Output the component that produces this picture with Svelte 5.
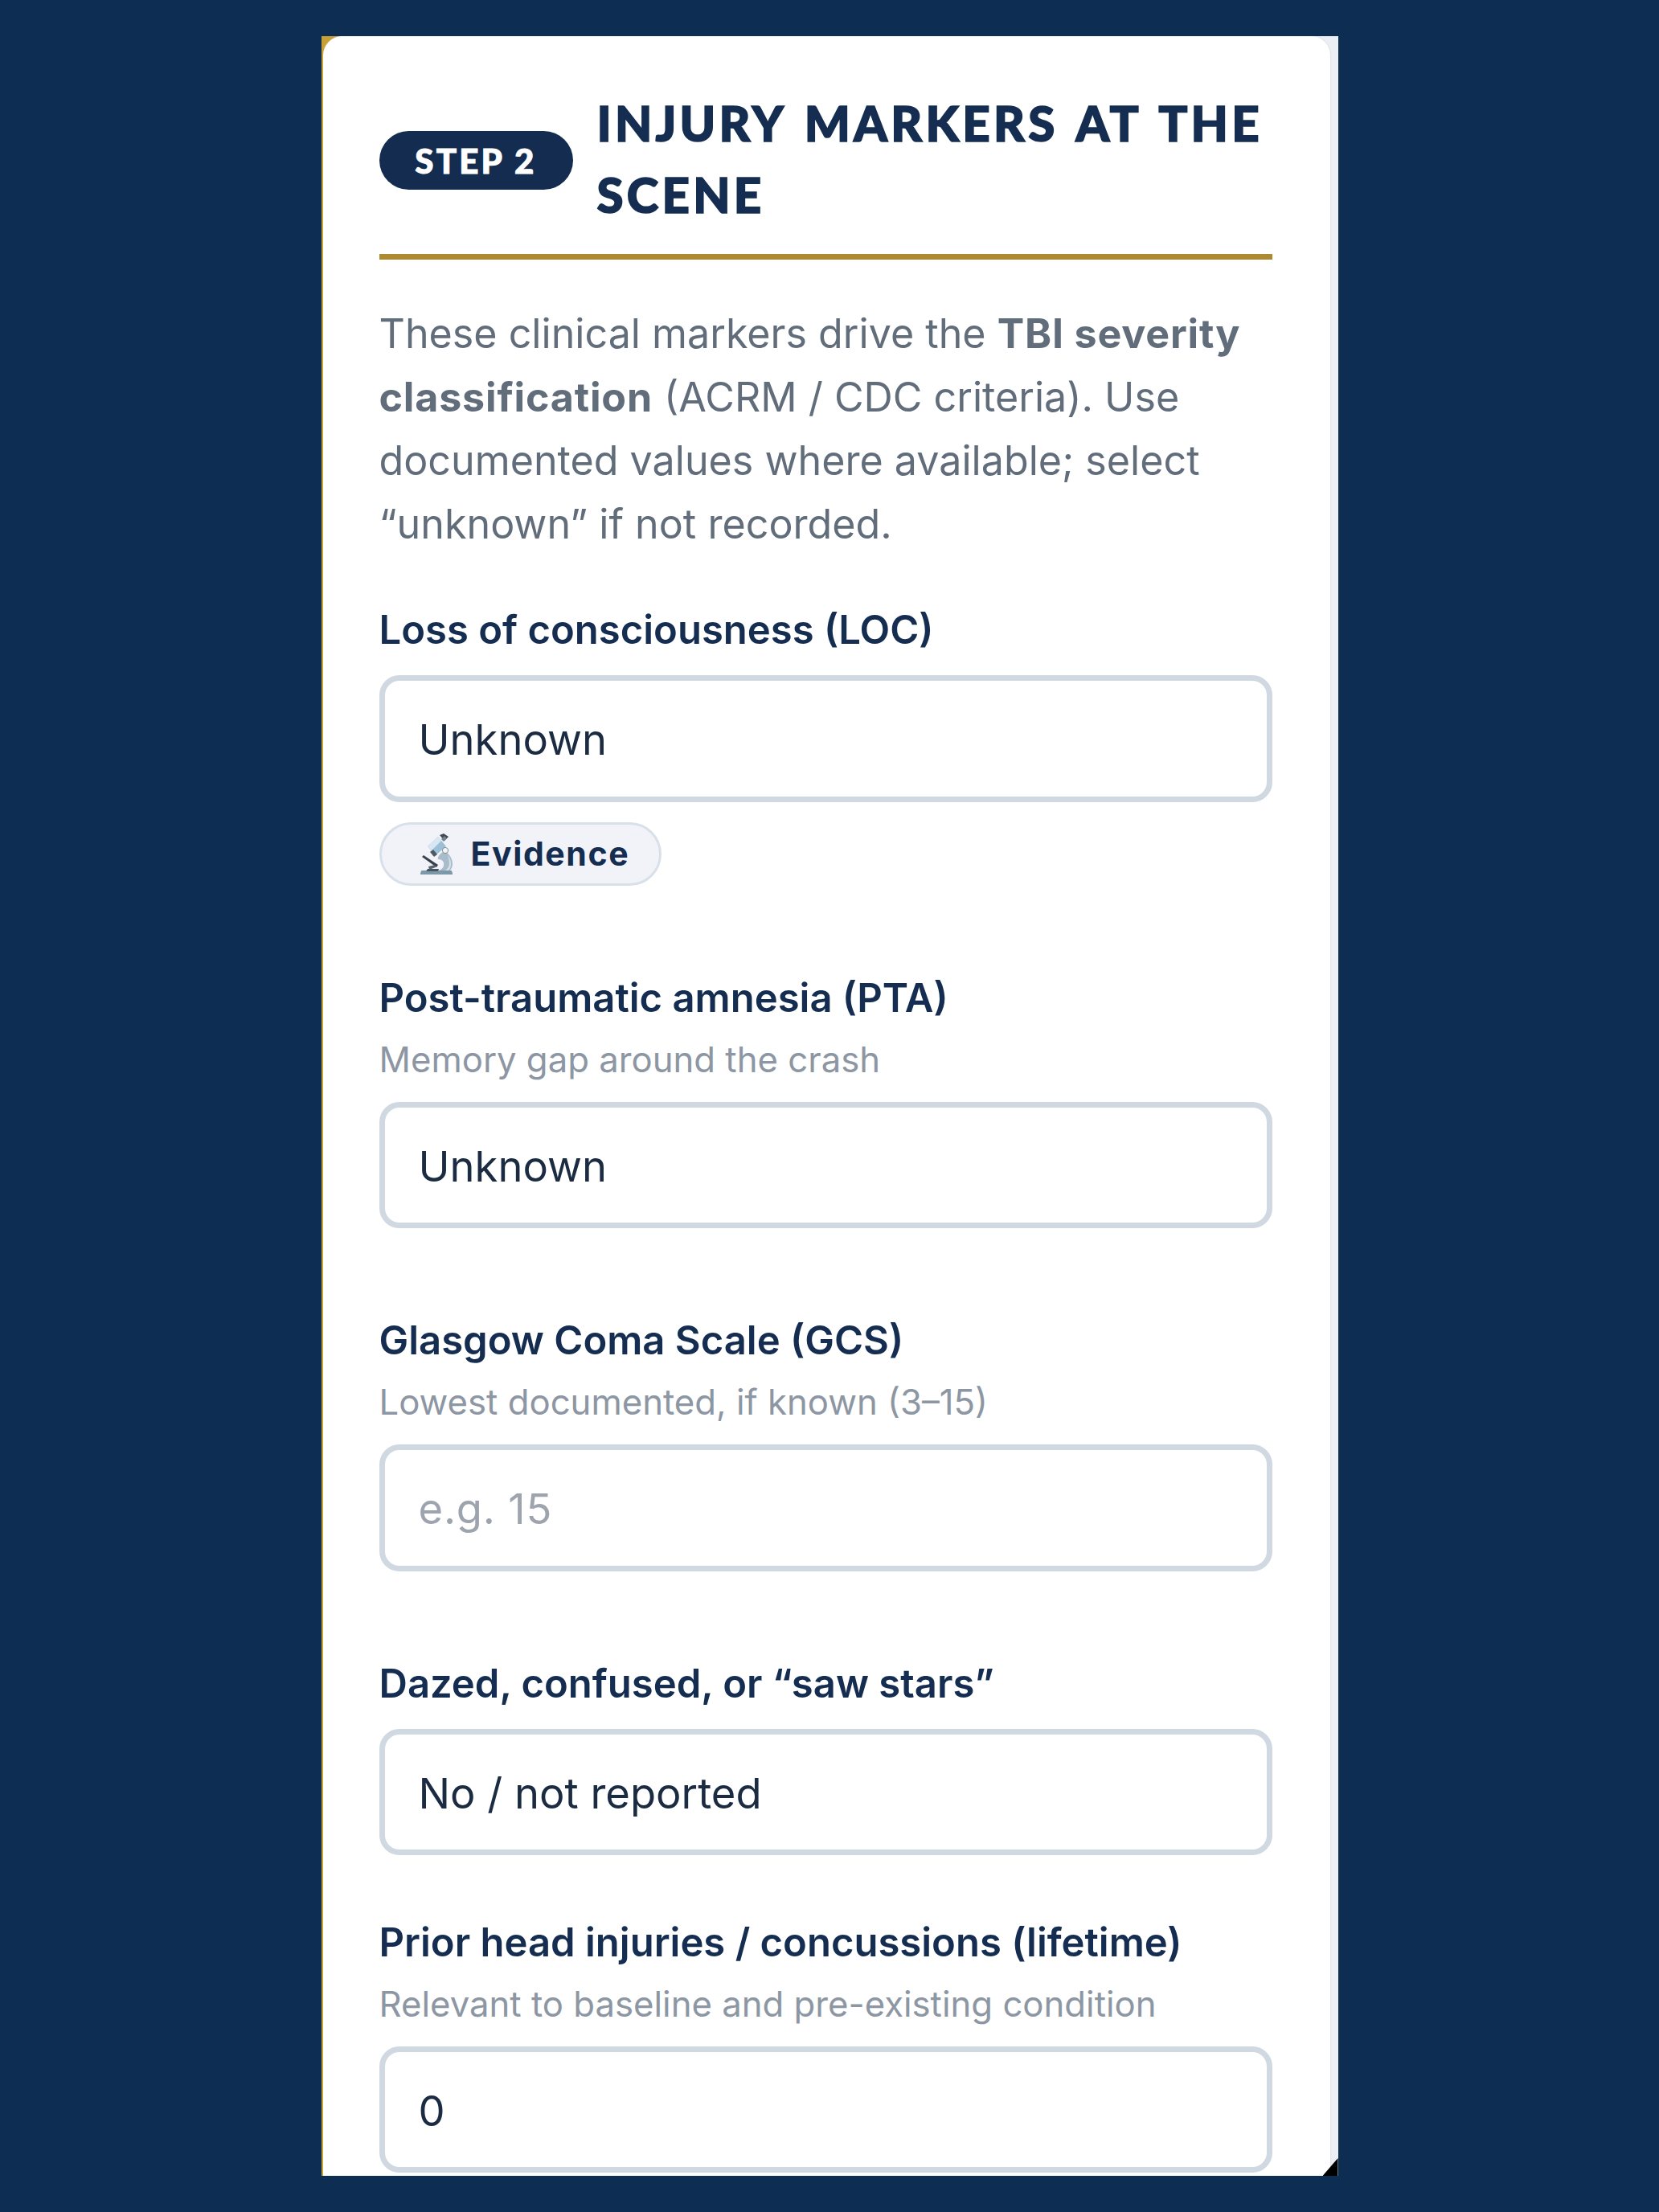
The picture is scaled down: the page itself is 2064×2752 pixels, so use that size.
<script>
  const selectFields = {
    loc: ['Unknown', 'No', 'Yes, under 30 minutes', 'Yes, over 30 minutes'],
    pta: ['Unknown', 'None', 'Under 24 hours', 'Over 24 hours'],
    dazed: ['No / not reported', 'Yes']
  };
</script>

<main class="page">
  <div class="frame">
    <section class="card">
      <header class="head">
        <span class="step">STEP 2</span>
        <h2>INJURY MARKERS AT THE SCENE</h2>
      </header>

      <p class="intro">
        These clinical markers drive the <strong>TBI severity classification</strong> (ACRM / CDC criteria). Use documented values where available; select “unknown” if not recorded.
      </p>

      <div class="field">
        <label for="loc">Loss of consciousness (LOC)</label>
        <select id="loc" class="control">
          {#each selectFields.loc as opt}
            <option>{opt}</option>
          {/each}
        </select>
        <button class="evidence" type="button">
          <svg class="scope" viewBox="0 0 40 51" aria-hidden="true">
            <path d="M30 22c6 3 10 9 10 16 0 4-2 7-4 9H19c5-1 9-3 10-7 1-5-2-8-7-8-1-3 3-8 8-10z" fill="#a9bccb" />
            <path d="M34 27c3 3 4 7 4 11 0 3-1 6-3 8h-4c3-2 5-5 5-9 0-4-1-7-2-10z" fill="#d5dfe6" />
            <path d="M2 46h36c1 0 2 2 2 5H0c0-3 1-5 2-5z" fill="#7d98a9" />
            <path d="M9 44h14l-1 3H7z" fill="#47555f" />
            <path d="M9 16 22 4l10 12-13 11z" fill="#9cc0d8" />
            <path d="M9 16 22 4l4 5-12 12z" fill="#d8e7f1" />
            <path d="M24 2l5-2 6 4-5 5z" fill="#3f4a54" />
            <path d="M26 7l4-4 3 3-4 4z" fill="#76838e" />
            <path d="M12 23l4-3 5 6-4 3z" fill="#4c5a65" />
            <path d="M2 29l2-2 18 12-2 3z" fill="#37424c" />
            <path d="M10 41l8-2 1 3-8 3z" fill="#56646f" />
            <circle cx="31" cy="21" r="3.6" fill="#f2f5f7" stroke="#6a7883" stroke-width="0.8" />
          </svg>
          <span>Evidence</span>
        </button>
      </div>

      <div class="field">
        <label for="pta">Post-traumatic amnesia (PTA)</label>
        <p class="hint">Memory gap around the crash</p>
        <select id="pta" class="control">
          {#each selectFields.pta as opt}
            <option>{opt}</option>
          {/each}
        </select>
      </div>

      <div class="field">
        <label for="gcs">Glasgow Coma Scale (GCS)</label>
        <p class="hint">Lowest documented, if known (3–15)</p>
        <input id="gcs" class="control" type="text" placeholder="e.g. 15" />
      </div>

      <div class="field tight">
        <label for="dazed">Dazed, confused, or “saw stars”</label>
        <select id="dazed" class="control">
          {#each selectFields.dazed as opt}
            <option>{opt}</option>
          {/each}
        </select>
      </div>

      <div class="field">
        <label for="prior">Prior head injuries / concussions (lifetime)</label>
        <p class="hint">Relevant to baseline and pre-existing condition</p>
        <input id="prior" class="control" type="text" value="0" />
      </div>
    </section>
    <span class="corner"></span>
  </div>
</main>

<style>
  :global(body) {
    margin: 0;
    background: #0d2d52;
  }

  .page {
    height: 2752px;
    padding-top: 45px;
    box-sizing: border-box;
    display: flex;
    justify-content: center;
    font-family: Inter, "Liberation Sans", sans-serif;
  }

  .frame {
    position: relative;
    width: 1265px;
    height: 2662px;
    overflow: hidden;
    display: flex;
    background: linear-gradient(to right, #c9a035 50%, #eceff4 50%);
  }

  .card {
    flex: 1;
    margin-left: 2px;
    margin-right: 10px;
    padding: 64px 72px 0 70px;
    background: #fff;
    border-radius: 24px 24px 0 0;
    box-shadow: 1px 0 2px #dfe3ea;
  }

  .head {
    display: flex;
    align-items: center;
    gap: 30px;
    padding-bottom: 29px;
    border-bottom: 7px solid #ad8a2f;
  }

  .step {
    flex: none;
    width: 241px;
    height: 73px;
    margin-top: 3px;
    border-radius: 37px;
    background: #142c4f;
    color: #fff;
    display: flex;
    align-items: center;
    justify-content: center;
    font-family: Lato, sans-serif;
    font-weight: 900;
    font-size: 42px;
    letter-spacing: 3.2px;
    -webkit-text-stroke: 1px #fff;
  }

  h2 {
    margin: 0;
    color: #142d50;
    font-family: Lato, sans-serif;
    font-weight: 900;
    font-size: 60px;
    line-height: 89px;
    letter-spacing: 4.2px;
    word-spacing: 5.5px;
    -webkit-text-stroke: 1.6px #142d50;
  }

  .intro {
    margin: 51.5px 0 56.5px;
    color: #626d7c;
    font-size: 50.2px;
    line-height: 79px;
  }

  .intro strong {
    font-weight: 700;
    letter-spacing: 0.8px;
  }

  .field {
    margin-bottom: 103px;
  }

  .field.tight {
    margin-bottom: 71.5px;
  }

  label {
    display: block;
    color: #142d50;
    font-size: 49px;
    font-weight: 600;
    line-height: 74px;
  }

  .hint {
    margin: 7px 0 0;
    color: #8d96a3;
    font-size: 43.7px;
    line-height: 66px;
  }

  .control {
    display: block;
    box-sizing: border-box;
    width: 100%;
    height: 157.5px;
    margin-top: 19px;
    padding: 3px 42px 0;
    border: 7px solid #d0d8e2;
    border-radius: 25px;
    background: #fff;
    color: #1a2b42;
    font-family: inherit;
    font-size: 52.5px;
    appearance: none;
    outline: none;
  }

  .control::placeholder {
    color: #9ea4ad;
    opacity: 1;
    letter-spacing: 0.8px;
  }

  .evidence {
    display: flex;
    align-items: center;
    gap: 23px;
    box-sizing: border-box;
    width: 351px;
    height: 79px;
    margin-top: 25px;
    padding: 0 0 0 48px;
    border: 3px solid #d8e0ea;
    border-radius: 40px;
    background: #f1f3f8;
    color: #142d50;
    font-family: inherit;
    font-size: 41px;
    font-weight: 700;
    letter-spacing: 1.6px;
  }

  .scope {
    flex: none;
    width: 40px;
    height: 51px;
  }

  .corner {
    position: absolute;
    right: 0;
    bottom: 0;
    width: 19px;
    height: 22px;
    background: #000;
    clip-path: polygon(100% 0, 100% 100%, 0 100%);
  }
</style>
